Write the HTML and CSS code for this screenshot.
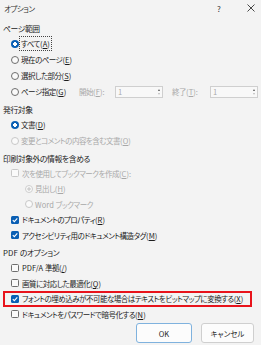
FILE: index.html
```html
<!DOCTYPE html>
<html lang="ja">
<head>
<meta charset="utf-8">
<link rel="stylesheet" href="styles.css">
</head>
<body>
<div class="dlg">
  <div class="titlebar">
    <span class="title">オプション</span>
    <span class="help">?</span>
    <span class="close"><svg width="8" height="8" viewBox="0 0 8 8"><path d="M0.5 0.5L7.5 7.5M7.5 0.5L0.5 7.5" stroke="#333" stroke-width="0.9" fill="none"/></svg></span>
  </div>

  <div class="hdr h-first">ページ範囲</div>
  <div class="row r16"><span class="radio on"></span><span class="lbl focus">すべて<span class="k">(<u>A</u>)</span></span></div>
  <div class="row r16"><span class="radio"></span><span class="lbl">現在のページ<span class="k">(<u>E</u>)</span></span></div>
  <div class="row r16"><span class="radio"></span><span class="lbl">選択した部分<span class="k">(<u>S</u>)</span></span></div>
  <div class="row r16">
    <span class="radio"></span><span class="lbl pglbl">ページ指定<span class="k">(<u>G</u>)</span></span>
    <span class="spinlbl dis">開始<span class="k">(<u>F</u>):</span></span>
    <span class="spin"><span class="val">1</span><span class="arrows"><i class="up"></i><i class="dn"></i></span></span>
    <span class="spinlbl dis end">終了<span class="k">(<u>T</u>):</span></span>
    <span class="spin"><span class="val">1</span><span class="arrows"><i class="up"></i><i class="dn"></i></span></span>
  </div>

  <div class="hdr">発行対象</div>
  <div class="row r16"><span class="radio on"></span><span class="lbl">文書<span class="k">(<u>D</u>)</span></span></div>
  <div class="row r16"><span class="radio dis"></span><span class="lbl dis">変更とコメントの内容を含む文書<span class="k">(<u>O</u>)</span></span></div>

  <div class="hdr">印刷対象外の情報を含める</div>
  <div class="row"><span class="check dis"></span><span class="lbl dis">次を使用してブックマークを作成<span class="k">(<u>C</u>):</span></span></div>
  <div class="row sub"><span class="radio dis dot"></span><span class="lbl dis">見出し<span class="k">(<u>H</u>)</span></span></div>
  <div class="row sub"><span class="radio dis"></span><span class="lbl dis"><span class="k">Word </span>ブックマーク</span></div>
  <div class="row"><span class="check on"></span><span class="lbl">ドキュメントのプロパティ<span class="k">(<u>R</u>)</span></span></div>
  <div class="row"><span class="check on"></span><span class="lbl">アクセシビリティ用のドキュメント構造タグ<span class="k">(<u>M</u>)</span></span></div>

  <div class="hdr"><span class="k">PDF </span>のオプション</div>
  <div class="row"><span class="check"></span><span class="lbl"><span class="k">PDF/A </span>準拠<span class="k">(<u>/</u>)</span></span></div>
  <div class="row"><span class="check"></span><span class="lbl">画質に対応した最適化<span class="k">(<u>Q</u>)</span></span></div>
  <div class="row hl"><span class="check on"></span><span class="lbl">フォントの埋め込みが不可能な場合はテキストをビットマップに変換する<span class="k">(<u>X</u>)</span></span></div>
  <div class="row"><span class="check"></span><span class="lbl">ドキュメントをパスワードで暗号化する<span class="k">(<u>N</u>)</span></span></div>

  <div class="btns">
    <span class="btn def">OK</span>
    <span class="btn cancel">キャンセル</span>
  </div>
</div>
</body>
</html>
```

FILE: styles.css
```css
html, body {
  margin: 0;
  padding: 0;
}
body {
  background: #f3f3f3;
  width: 261px;
  height: 345px;
  overflow: hidden;
  font-family: "Noto Sans CJK JP", "Noto Sans", sans-serif;
  font-size: 7.5px;
  letter-spacing: -0.5px;
  color: #1c1c1c;
  font-feature-settings: "palt";
}
.dlg {
  display: flex;
  flex-direction: column;
}
u {
  text-decoration: underline;
  text-underline-offset: 1px;
}
.k {
  letter-spacing: 0.1px;
}
.titlebar {
  height: 16px;
  display: flex;
  align-items: center;
  padding-left: 4px;
  color: #333;
}
.title {
  flex: 1;
}
.help {
  width: 30px;
  font-size: 8px;
}
.close {
  width: 14px;
  display: flex;
  align-items: center;
}
.hdr {
  height: 15px;
  display: flex;
  align-items: center;
  padding-left: 3px;
  margin-top: 2px;
  color: #222;
  font-size: 7.8px;
  letter-spacing: -0.4px;
  white-space: pre;
}
.hdr.h-first {
  margin-top: 4.5px;
}
.row {
  height: 15.5px;
  display: flex;
  align-items: center;
  padding-left: 11px;
  box-sizing: border-box;
}
.row.r16 {
  height: 16px;
}
.row.sub {
  padding-left: 25px;
}
.lbl {
  white-space: pre;
}
.dis {
  color: #a8a8a8;
}
.focus {
  outline: 1px dotted #444;
  outline-offset: 1px;
}
.radio {
  width: 8px;
  height: 8px;
  border-radius: 50%;
  border: 1px solid #6e6e6e;
  box-sizing: border-box;
  margin-right: 2px;
  flex: none;
  background: #fafafa;
}
.radio.on {
  border: none;
  background: radial-gradient(circle, #ffffff 0 1.6px, #0a5fb4 2.1px);
}
.radio.dis {
  border-color: #c8c8c8;
}
.radio.dis.dot {
  background: radial-gradient(circle, #cfcfcf 0 1.4px, #fafafa 1.9px);
  border-color: #cfcfcf;
}
.check {
  width: 8px;
  height: 8px;
  border: 1px solid #6e6e6e;
  border-radius: 1.5px;
  box-sizing: border-box;
  margin-right: 3px;
  flex: none;
  background: #fafafa;
}
.check.dis {
  border-color: #c8c8c8;
}
.check.on {
  border: none;
  background: #0a5fb4 url("data:image/svg+xml,%3Csvg xmlns='http://www.w3.org/2000/svg' width='8' height='8' viewBox='0 0 8 8'%3E%3Cpath d='M1.8 4.1L3.3 5.6L6.3 2.4' stroke='white' stroke-width='1.1' fill='none'/%3E%3C/svg%3E") no-repeat center;
}
.pglbl {
  width: 58px;
  flex: none;
}
.spinlbl {
  width: 36px;
  flex: none;
  white-space: nowrap;
}
.spinlbl.end {
  width: 38px;
  margin-left: 9px;
}
.spin {
  width: 48px;
  height: 12px;
  box-sizing: border-box;
  border: 1px solid #cfcfcf;
  background: #f8f8f8;
  display: flex;
  align-items: center;
  justify-content: space-between;
  flex: none;
}
.spin .val {
  color: #a8a8a8;
  padding-left: 2px;
}
.arrows {
  display: flex;
  flex-direction: column;
  gap: 2px;
  padding-right: 2px;
}
.arrows i {
  display: block;
  width: 0;
  height: 0;
  border-left: 1.5px solid transparent;
  border-right: 1.5px solid transparent;
}
.arrows .up {
  border-bottom: 2px solid #555;
}
.arrows .dn {
  border-top: 2px solid #bbb;
}
.row.hl {
  margin-left: 3px;
  width: 249px;
  border: 2px solid #e8131b;
  padding-left: 6px;
}
.btns {
  display: flex;
  justify-content: flex-end;
  gap: 9px;
  padding-right: 7px;
  margin-top: 1px;
}
.btn {
  height: 20px;
  box-sizing: border-box;
  border: 1px solid #cfcfcf;
  border-radius: 3px;
  background: #fcfcfc;
  display: flex;
  align-items: center;
  justify-content: center;
  color: #1c1c1c;
  letter-spacing: 0;
}
.btn.def {
  width: 56px;
  border-color: #7fb2de;
}
.btn.cancel {
  width: 53px;
}
```
